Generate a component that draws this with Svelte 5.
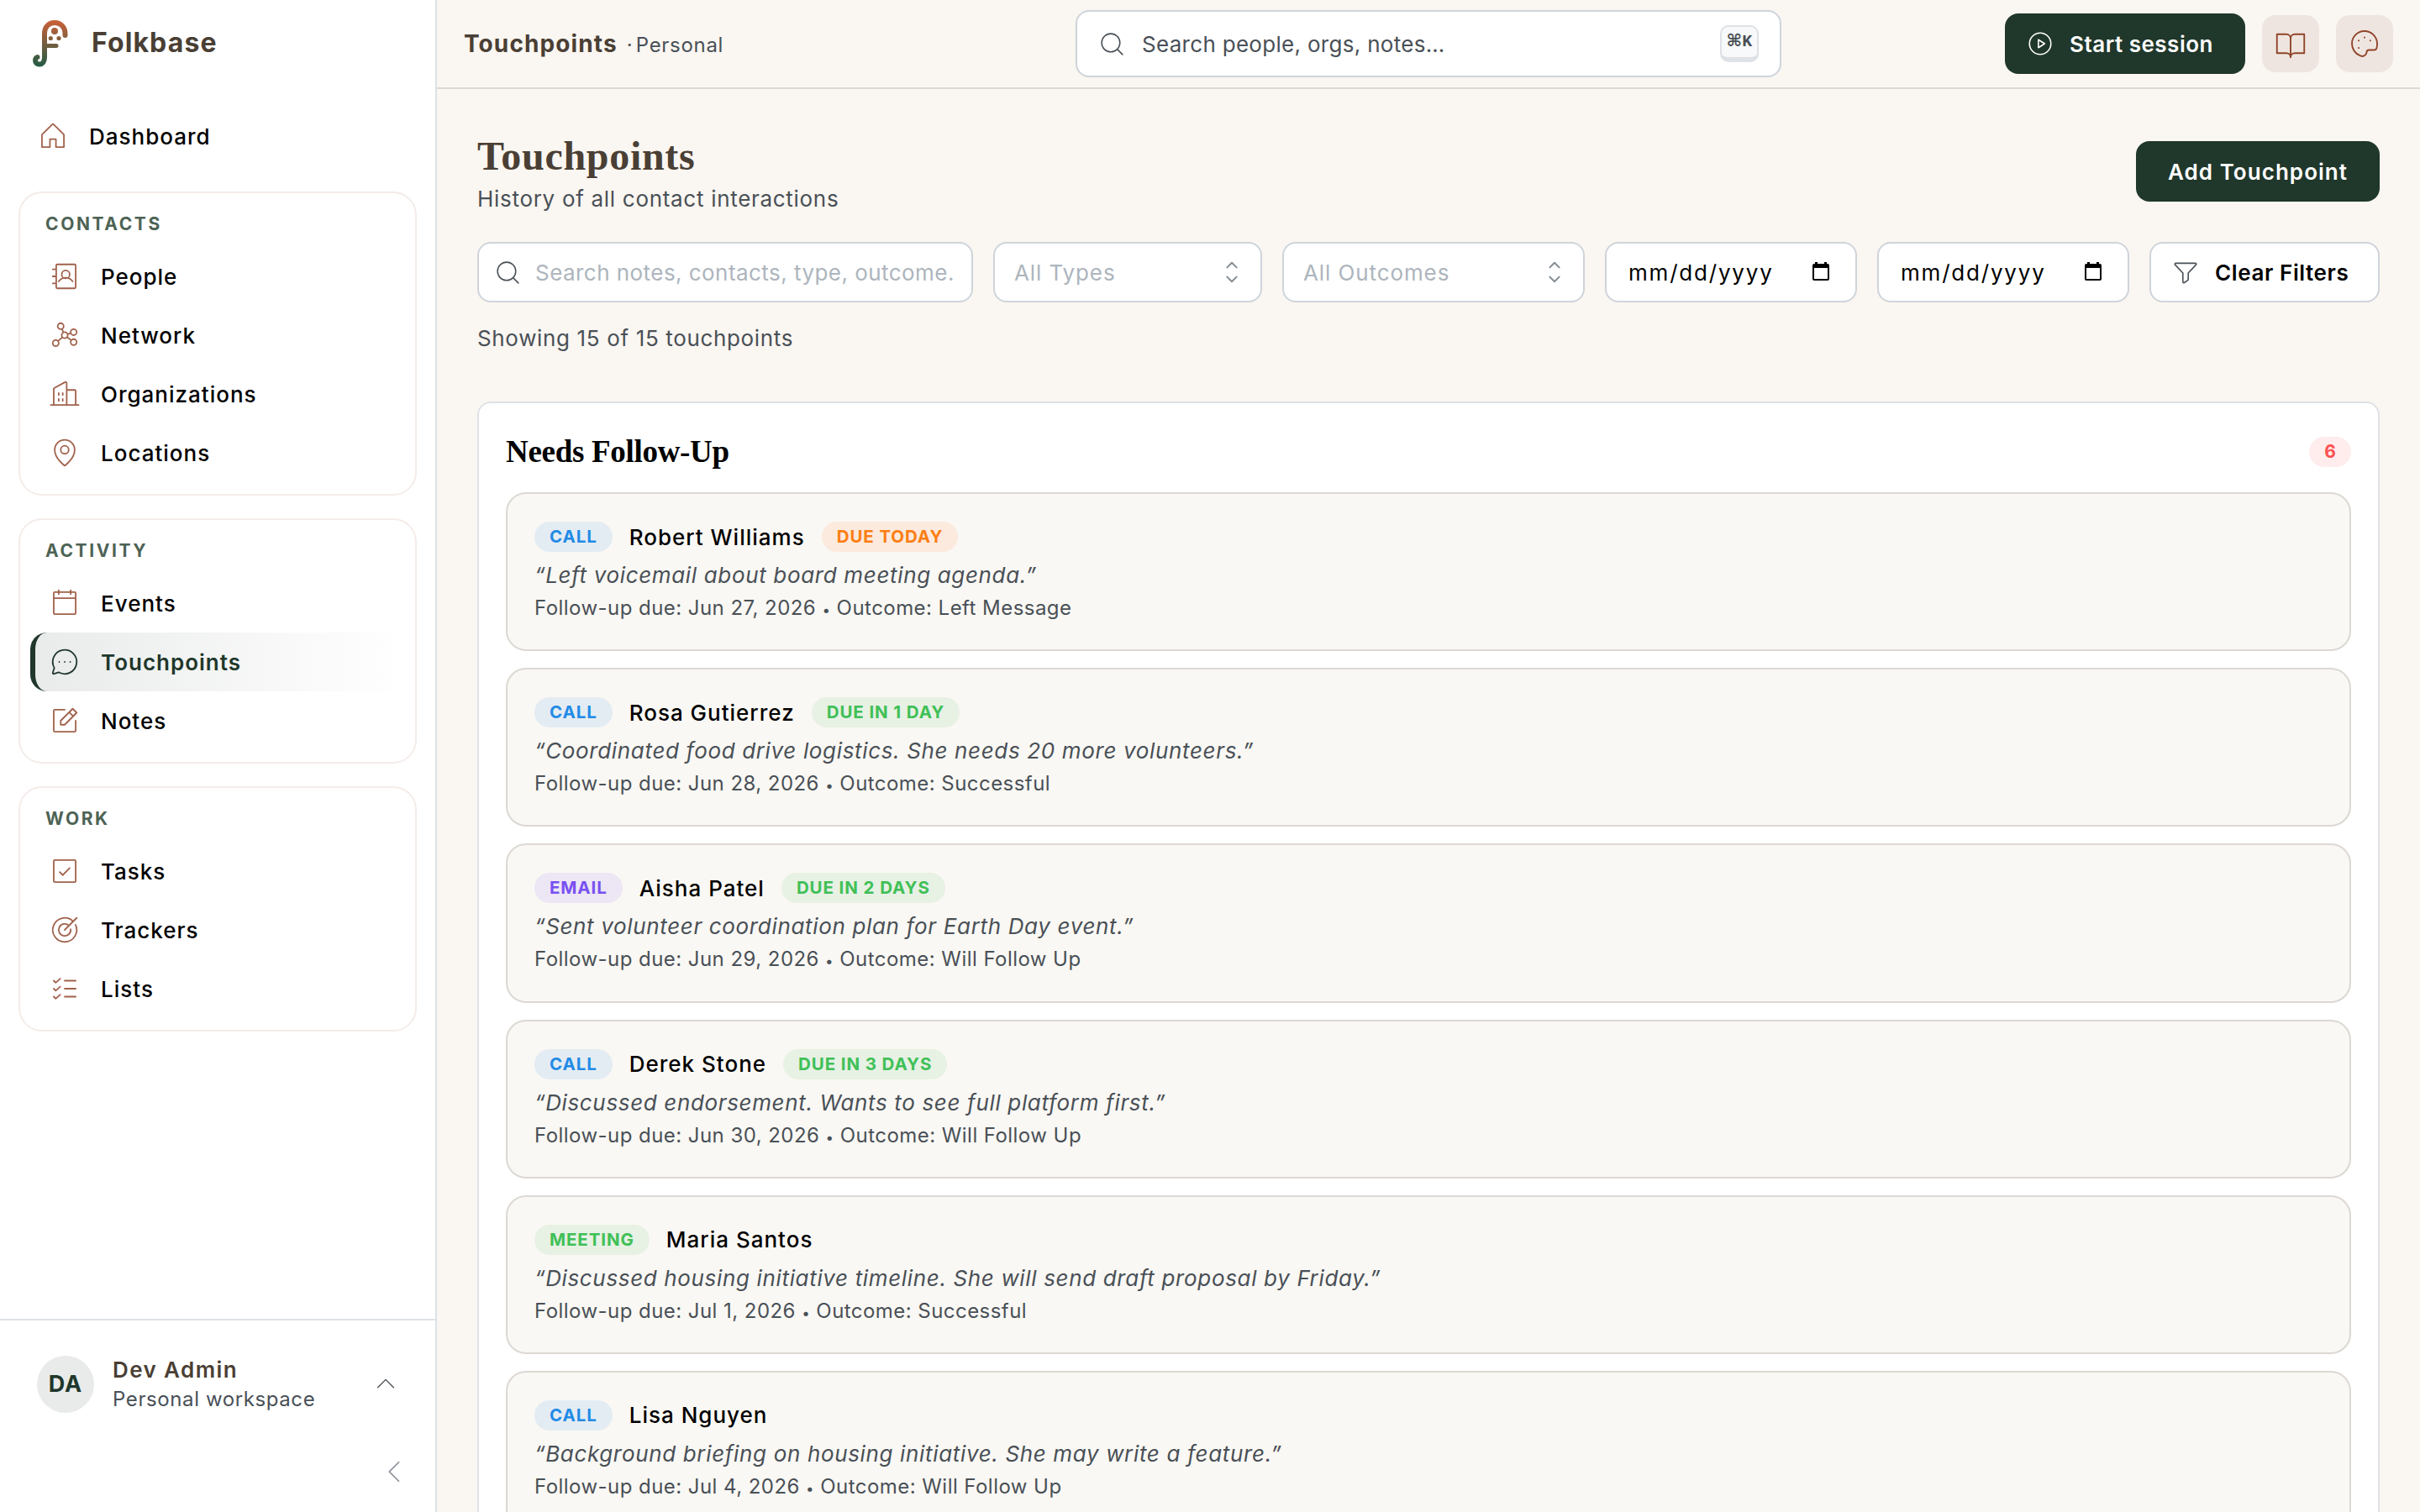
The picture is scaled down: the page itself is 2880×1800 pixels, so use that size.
<script>
  const icons = {
    house: "M104 216V152h48v64h64V120a8 8 0 0 0-2.34-5.66l-80-80a8 8 0 0 0-11.32 0l-80 80A8 8 0 0 0 40 120v96Z",
    people: "M68 32H208a8 8 0 0 1 8 8V216a8 8 0 0 1-8 8H68a8 8 0 0 1-8-8V40a8 8 0 0 1 8-8ZM32 72H60M32 128H60M32 184H60M104 112a32 32 0 1 0 64 0a32 32 0 1 0-64 0M80 168a68 68 0 0 1 112 0",
    network: "M104 128a24 24 0 1 0 48 0a24 24 0 1 0-48 0M72 56a24 24 0 1 0 48 0a24 24 0 1 0-48 0M176 104a24 24 0 1 0 48 0a24 24 0 1 0-48 0M176 184a24 24 0 1 0 48 0a24 24 0 1 0-48 0M32 192a24 24 0 1 0 48 0a24 24 0 1 0-48 0M118.3 106.1 105.7 77.9M177.2 111.6 150.8 120.4M181 169.3 147 142.7M110 144 74 176",
    orgs: "M16 216H240M40 216V88a8 8 0 0 1 3.9-6.9L132 33a8 8 0 0 1 12 6.9V216M144 96H208a8 8 0 0 1 8 8V216M80 120V136M112 120V136M80 168V184M112 168V184",
    pin: "M96 104a32 32 0 1 0 64 0a32 32 0 1 0-64 0M208 104c0 72-80 128-80 128S48 176 48 104a80 80 0 0 1 160 0Z",
    calendar: "M48 40H208a8 8 0 0 1 8 8V208a8 8 0 0 1-8 8H48a8 8 0 0 1-8-8V48a8 8 0 0 1 8-8ZM176 24V56M80 24V56M40 88H216",
    chat: "M79.9 211.1a96 96 0 1 0-35-35L32.4 213.5a8 8 0 0 0 10.1 10.1ZM84 127.5v1M128 127.5v1M172 127.5v1",
    note: "M96 160V128L192 32l32 32-96 96ZM164 60l32 32M216 128v80a8 8 0 0 1-8 8H48a8 8 0 0 1-8-8V48a8 8 0 0 1 8-8h80",
    task: "M48 40H208a8 8 0 0 1 8 8V208a8 8 0 0 1-8 8H48a8 8 0 0 1-8-8V48a8 8 0 0 1 8-8ZM88 136l24 24 56-56",
    target: "M128 128 224 32M195.9 60.1a96 96 0 1 0 18.8 26.5M161.9 94.1a48 48 0 1 0 13.9 28.7",
    list: "M128 64H216M128 128H216M128 192H216M40 64l16 16L92 48M40 128l16 16 36-32M40 192l16 16 36-32",
    search: "M32 116a84 84 0 1 0 168 0a84 84 0 1 0-168 0M175.4 175.4 224 224",
    play: "M32 128a96 96 0 1 0 192 0a96 96 0 1 0-192 0M112 92v72l56-36Z",
    book: "M128 88a32 32 0 0 1 32-32h72V200H160a32 32 0 0 0-32 32M24 200H96a32 32 0 0 1 32 32V88A32 32 0 0 0 96 56H24Z",
    palette: "M144 194a18 18 0 0 1 18-18h38a20 20 0 0 0 20-15A96.5 96.5 0 0 0 224 127.2c-.5-52.8-44.2-95.7-97-95.2a96 96 0 0 0-95 96c0 41.8 26.7 79 64 92A36 36 0 0 0 140 206ZM128 79.5v2M84 103v2M84 159v2M172 103v2",
    funnel: "M34 61.4A8 8 0 0 1 40 48H216a8 8 0 0 1 5.9 13.4L152 136v58a8 8 0 0 1-3.6 6.7l-32 21.3A8 8 0 0 1 104 215.3V136Z",
    up: "M48 160l80-80 80 80",
    left: "M160 208l-80-80 80-80",
    sort: "M80 80l48-48 48 48M80 176l48 48 48-48",
  };

  const groups = [
    { title: "Contacts", items: [["people", "People"], ["network", "Network"], ["orgs", "Organizations"], ["pin", "Locations"]] },
    { title: "Activity", items: [["calendar", "Events"], ["chat", "Touchpoints"], ["note", "Notes"]] },
    { title: "Work", items: [["task", "Tasks"], ["target", "Trackers"], ["list", "Lists"]] },
  ];
  const active = "Touchpoints";

  const followUps = [
    { type: "call", name: "Robert Williams", due: "Due today", today: true, note: "Left voicemail about board meeting agenda.", date: "Jun 27, 2026", outcome: "Left Message" },
    { type: "call", name: "Rosa Gutierrez", due: "Due in 1 day", note: "Coordinated food drive logistics. She needs 20 more volunteers.", date: "Jun 28, 2026", outcome: "Successful" },
    { type: "email", name: "Aisha Patel", due: "Due in 2 days", note: "Sent volunteer coordination plan for Earth Day event.", date: "Jun 29, 2026", outcome: "Will Follow Up" },
    { type: "call", name: "Derek Stone", due: "Due in 3 days", note: "Discussed endorsement. Wants to see full platform first.", date: "Jun 30, 2026", outcome: "Will Follow Up" },
    { type: "meeting", name: "Maria Santos", note: "Discussed housing initiative timeline. She will send draft proposal by Friday.", date: "Jul 1, 2026", outcome: "Successful" },
    { type: "call", name: "Lisa Nguyen", note: "Background briefing on housing initiative. She may write a feature.", date: "Jul 4, 2026", outcome: "Will Follow Up" },
  ];
</script>

{#snippet icon(name, size, stroke = 12)}
  <svg class="icon" width={size} height={size} viewBox="0 0 256 256" stroke-width={stroke} aria-hidden="true"><path d={icons[name]} /></svg>
{/snippet}

{#snippet dateField()}
  <div class="field date">
    <span>mm/dd/yyyy</span>
    <svg width="20" height="24" viewBox="0 0 20 24" aria-hidden="true"><path d="M2 2h1V0h3v2h8V0h3v2h1a2 2 0 0 1 2 2v16a2 2 0 0 1-2 2H2a2 2 0 0 1-2-2V4a2 2 0 0 1 2-2Zm0 5v13h16V7Z" fill-rule="evenodd" /></svg>
  </div>
{/snippet}

<div class="app">
  <aside class="sidebar">
    <div class="brand">
      <svg width="42" height="56" viewBox="0 0 42 56" aria-hidden="true">
        <defs>
          <linearGradient id="crook" x1="0" y1="0" x2="0" y2="56" gradientUnits="userSpaceOnUse">
            <stop offset="0" stop-color="#cb6038" />
            <stop offset="1" stop-color="#1f5c45" />
          </linearGradient>
        </defs>
        <g fill="none" stroke="url(#crook)" stroke-linecap="round" stroke-linejoin="round">
          <path stroke-width="6" d="M38.5 18v-2C38.5 8 33 3 26 3S14 8 14 16v28c0 5-2 8.5-6 8.5-3 0-5-2-5-4.5 0-2 1-3.5 2.5-4" />
          <path stroke-width="5" d="M15 30.5h13" />
        </g>
        <g fill="url(#crook)"><circle cx="26" cy="13" r="4" /><circle cx="21.3" cy="21.5" r="2.6" /><circle cx="31" cy="21.5" r="2.6" /></g>
      </svg>
      <span>Folkbase</span>
    </div>
    <nav>
      <a class="item home" href="#dashboard">{@render icon("house", 38)}<span>Dashboard</span></a>
      {#each groups as g (g.title)}
        <section class="group">
          <h2>{g.title}</h2>
          {#each g.items as [glyph, label] (label)}
            <a class="item" class:active={label === active} href="#{label}">{@render icon(glyph, 38)}<span>{label}</span></a>
          {/each}
        </section>
      {/each}
    </nav>
    <footer>
      <div class="user">
        <span class="avatar">DA</span>
        <div class="who"><b>Dev Admin</b><span>Personal workspace</span></div>
        {@render icon("up", 30)}
      </div>
      <button class="collapse" aria-label="Collapse sidebar">{@render icon("left", 36)}</button>
    </footer>
  </aside>

  <div class="main">
    <header class="topbar">
      <div class="crumb"><b>Touchpoints</b><span>· Personal</span></div>
      <div class="global">{@render icon("search", 33)}<span>Search people, orgs, notes…</span><kbd>⌘K</kbd></div>
      <div class="actions">
        <button class="primary start">{@render icon("play", 34)}<span>Start session</span></button>
        <button class="square" aria-label="Guide">{@render icon("book", 40)}</button>
        <button class="square" aria-label="Theme">{@render icon("palette", 40)}</button>
      </div>
    </header>

    <main>
      <div class="head">
        <div>
          <h1>Touchpoints</h1>
          <p class="sub">History of all contact interactions</p>
        </div>
        <button class="primary add">Add Touchpoint</button>
      </div>

      <div class="filters">
        <div class="field query">{@render icon("search", 33)}<span>Search notes, contacts, type, outcome.</span></div>
        <div class="field types"><span>All Types</span>{@render icon("sort", 30, 18)}</div>
        <div class="field outcomes"><span>All Outcomes</span>{@render icon("sort", 30, 18)}</div>
        {@render dateField()}
        {@render dateField()}
        <button class="field clear">{@render icon("funnel", 34)}<span>Clear Filters</span></button>
      </div>
      <p class="count">Showing 15 of 15 touchpoints</p>

      <section class="panel">
        <div class="panel-head"><h3>Needs Follow-Up</h3><span class="total">6</span></div>
        {#each followUps as f (f.name)}
          <article>
            <div class="line">
              <span class="badge {f.type}">{f.type}</span>
              <span class="name">{f.name}</span>
              {#if f.due}<span class="badge due" class:today={f.today}>{f.due}</span>{/if}
            </div>
            <p class="note">“{f.note}”</p>
            <p class="meta">Follow-up due: {f.date} <i>•</i> Outcome: {f.outcome}</p>
          </article>
        {/each}
      </section>
    </main>
  </div>
</div>

<style>
  :global(body) { margin: 0; background: #faf6f1; }
  .app { display: flex; width: 2880px; height: 1800px; overflow: hidden; font-family: Inter, "Open Sans", sans-serif; font-size: 26px; font-weight: 370; color: #000; background: #faf6f1; }
  .app * { box-sizing: border-box; }
  h1, h2, h3, p { margin: 0; }
  button { font: inherit; border: 0; padding: 0; }
  span, b { white-space: nowrap; }
  .icon { flex: none; fill: none; stroke: currentColor; stroke-linecap: round; stroke-linejoin: round; }

  .sidebar { width: 520px; flex: none; display: flex; flex-direction: column; background: #fff; border-right: 2px solid #dee2e6; }
  .brand { height: 104px; display: flex; align-items: center; gap: 28px; padding-left: 39px; font-size: 32px; font-weight: 700; letter-spacing: 1.1px; color: #4a3f35; }
  .brand span { margin-top: -3px; }
  nav { flex: 1; padding: 23px 22px 0; }
  .item { display: flex; align-items: center; height: 70px; padding-left: 22px; gap: 24px; color: #000; text-decoration: none; font-weight: 480; letter-spacing: 1px; border-left: 0 solid #20372b; }
  .item .icon { color: #a0614b; }
  .home { margin-bottom: 31px; }
  .group { width: 474px; padding: 12px 12px 14px; border: 2px solid #f4ece9; border-radius: 28px; margin-bottom: 27px; }
  .group h2 { height: 52px; padding: 9px 0 0 18px; line-height: 32px; font-size: 21px; font-weight: 700; text-transform: uppercase; letter-spacing: 2.6px; color: #4d6355; }
  .active { padding-left: 16px; border-left-width: 6px; border-radius: 20px; font-weight: 600; color: #20372b; background: linear-gradient(90deg, #e9ebea, #fff); }
  .active .icon { color: #20372b; }
  footer { height: 230px; border-top: 2px solid #dee2e6; display: flex; flex-direction: column; padding: 42px 40px 0 44px; }
  .user { display: flex; align-items: center; height: 68px; }
  .user .icon { margin-left: auto; margin-right: 4px; color: #495057; }
  .avatar { width: 68px; height: 68px; border-radius: 34px; background: #e9ebea; color: #20372b; font-size: 27px; font-weight: 700; letter-spacing: 1px; line-height: 68px; text-align: center; }
  .who { margin-left: 22px; display: flex; flex-direction: column; line-height: 35px; font-size: 24px; letter-spacing: 0.6px; color: #495057; }
  .who b { font-size: 26px; font-weight: 600; letter-spacing: 1.4px; color: #4a3f35; }
  .collapse { align-self: flex-end; height: 36px; margin: 52px -10px 0 0; background: none; color: #868e96; }

  .main { flex: 1; min-width: 0; display: flex; flex-direction: column; }
  .topbar { height: 106px; flex: none; display: flex; align-items: center; justify-content: space-between; padding: 0 32px; border-bottom: 2px solid #dcd8d4; }
  .crumb { width: 728px; display: flex; align-items: baseline; gap: 11px; font-size: 24px; letter-spacing: 0.7px; word-spacing: -4px; color: #495057; }
  .crumb b { font-size: 28px; font-weight: 700; letter-spacing: 1.1px; color: #4a3f35; }
  .global { width: 840px; height: 80px; display: flex; align-items: center; padding: 0 25px; gap: 19px; background: #fff; border: 2px solid #ced4da; border-radius: 16px; letter-spacing: 0.3px; color: #495057; }
  kbd { margin-left: auto; width: 46px; height: 44px; border: 2px solid #dee2e6; border-bottom-width: 6px; border-radius: 10px; background: #f8f9fa; font: 700 20px/36px "Liberation Mono", "DejaVu Sans", monospace; text-align: center; }
  .actions { width: 728px; display: flex; align-items: center; justify-content: flex-end; gap: 20px; }
  .primary { height: 72px; border-radius: 16px; background: #20372b; color: #fff; font-weight: 600; }
  .start { width: 286px; display: flex; align-items: center; padding-left: 25px; gap: 18px; letter-spacing: 0.5px; }
  .square { width: 68px; height: 68px; display: grid; place-items: center; border-radius: 16px; background: #efe5e0; color: #8f4429; }

  main { padding: 48px 48px 0; }
  .head { display: flex; justify-content: space-between; height: 134px; }
  h1 { padding-top: 1px; font: 700 48px/62px "Liberation Serif", serif; letter-spacing: 0.7px; color: #4a3f35; }
  .sub { line-height: 40px; letter-spacing: 0.7px; color: #495057; }
  .add { width: 290px; margin-top: 14px; letter-spacing: 1.05px; }
  .filters { display: flex; gap: 24px; }
  .field { height: 72px; display: flex; align-items: center; justify-content: space-between; padding: 0 19px 0 23px; background: #fff; border: 2px solid #ced4da; border-radius: 16px; letter-spacing: 0.9px; color: #adb5bd; }
  .field .icon { color: #868e96; }
  .query { width: 590px; justify-content: flex-start; gap: 16px; padding: 0 0 0 18px; letter-spacing: 0.45px; }
  .query .icon, .clear .icon { color: #495057; }
  .types { width: 320px; }
  .outcomes { width: 360px; }
  .date { width: 300px; padding: 0 31px 0 26px; letter-spacing: 1.8px; color: #000; }
  .clear { flex: 1; justify-content: flex-start; gap: 18px; padding-left: 24px; color: #000; font-weight: 600; letter-spacing: 0.6px; }
  .count { margin-top: 22px; line-height: 42px; letter-spacing: 0.65px; color: #495057; }

  .panel { margin-top: 54px; padding: 0 32px; background: #fff; border: 2px solid #dee2e6; border-radius: 16px; }
  .panel-head { height: 106px; display: flex; align-items: center; justify-content: space-between; padding-top: 9px; }
  h3 { font: 700 37px/48px "Liberation Serif", serif; letter-spacing: -0.3px; }
  .total { width: 50px; line-height: 36px; border-radius: 18px; background: #ffecec; color: #fa5252; font-size: 21px; font-weight: 700; text-align: center; }
  article { height: 189.2px; margin-bottom: 20px; padding: 30px 32px; background: #faf8f4; border: 2px solid #dcd8d4; border-radius: 24px; }
  .line { height: 42px; display: flex; align-items: center; gap: 20px; }
  .badge { height: 36px; padding: 0 18px; border-radius: 18px; line-height: 36px; font-size: 20.5px; font-weight: 700; text-transform: uppercase; letter-spacing: 0.9px; }
  .call { background: #e4ecf3; color: #228be6; }
  .email { background: #ece6f5; color: #7950f2; }
  .meeting, .due { background: #e7f1e4; color: #40c057; }
  .today { background: #fbeadd; color: #fd7e14; }
  .name { font-weight: 480; letter-spacing: 1px; }
  .note { margin-top: 4px; line-height: 42px; font-style: italic; letter-spacing: 0.65px; color: #495057; }
  .meta { margin-top: -1px; line-height: 38px; font-size: 24px; letter-spacing: 0.45px; color: #495057; }
  .meta i { font-style: normal; font-size: 17px; }
</style>
